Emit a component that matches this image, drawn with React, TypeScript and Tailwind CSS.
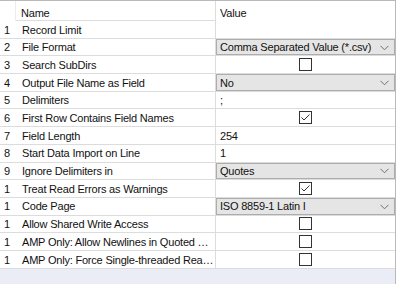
import React from "react";

type Row = {
  num: string;
  name: string;
  kind: "text" | "select" | "check" | "empty";
  value?: string;
  checked?: boolean;
};

const ROWS: Row[] = [
  { num: "1", name: "Record Limit", kind: "empty" },
  { num: "2", name: "File Format", kind: "select", value: "Comma Separated Value (*.csv)" },
  { num: "3", name: "Search SubDirs", kind: "check", checked: false },
  { num: "4", name: "Output File Name as Field", kind: "select", value: "No" },
  { num: "5", name: "Delimiters", kind: "text", value: ";" },
  { num: "6", name: "First Row Contains Field Names", kind: "check", checked: true },
  { num: "7", name: "Field Length", kind: "text", value: "254" },
  { num: "8", name: "Start Data Import on Line", kind: "text", value: "1" },
  { num: "9", name: "Ignore Delimiters in", kind: "select", value: "Quotes" },
  { num: "1", name: "Treat Read Errors as Warnings", kind: "check", checked: true },
  { num: "1", name: "Code Page", kind: "select", value: "ISO 8859-1 Latin I" },
  { num: "1", name: "Allow Shared Write Access", kind: "check", checked: false },
  { num: "1", name: "AMP Only: Allow Newlines in Quoted Fields", kind: "check", checked: false },
  { num: "1", name: "AMP Only: Force Single-threaded Read Mode", kind: "check", checked: false },
];

function Chevron() {
  return (
    <svg width="9" height="6" viewBox="0 0 9 6" fill="none" stroke="#707070" strokeWidth="1">
      <path d="M0.5 0.8 L4.5 4.8 L8.5 0.8" />
    </svg>
  );
}

function Check({ checked }: { checked?: boolean }) {
  return (
    <div className="w-[13px] h-[13px] border border-[#333333] bg-white flex items-center justify-center">
      {checked && (
        <svg width="11" height="11" viewBox="0 0 11 11" fill="none" stroke="#333333" strokeWidth="1">
          <path d="M1.5 5.5 L4 8 L9.5 2.5" />
        </svg>
      )}
    </div>
  );
}

function ValueCell({ row }: { row: Row }) {
  if (row.kind === "select") {
    return (
      <div className="h-full w-full flex items-center justify-between bg-[#e5e5e5] border border-[#adadad] pl-[3px] pr-[5px] pt-[1px] whitespace-nowrap">
        <span>{row.value}</span>
        <Chevron />
      </div>
    );
  }
  if (row.kind === "check") {
    return (
      <div className="h-full w-full flex items-center justify-center">
        <Check checked={row.checked} />
      </div>
    );
  }
  return <div className="h-full w-full flex items-center pl-[4px] pt-[1px] whitespace-nowrap">{row.value ?? ""}</div>;
}

export default function App() {
  return (
    <div
      className="w-[400px] h-[284px] bg-white text-[11px] tracking-[-0.2px] text-[#111111] overflow-hidden"
      style={{ fontFamily: '"Liberation Sans", Arial, sans-serif' }}
    >
      <div className="w-[396px] h-[284px] flex flex-col border-t border-r border-[#b9b9b9] bg-[#eaedf5]">
        {/* header */}
        <div className="flex h-[20px] bg-white shrink-0">
          <div className="w-[16px] border-r border-[#ececec]" />
          <div className="w-[199px] flex items-start pt-[4px] pl-[5px] border-b border-[#dcdcdc]">Name</div>
          <div className="flex-1 flex items-start pt-[4px] pl-[4px] border-l border-[#dcdcdc]">Value</div>
        </div>
        {ROWS.map((r, i) => (
          <div key={i} className="flex h-[17.7px] bg-white shrink-0">
            <div className="w-[215px] flex items-center pt-[1px] border-b border-[#dcdcdc]">
              <span className="w-[17px] pl-[4px]">{r.num}</span>
              <span className="pl-[5px] truncate w-[198px]">{r.name}</span>
            </div>
            <div className="flex-1 border-l border-[#dcdcdc] border-b">
              <ValueCell row={r} />
            </div>
          </div>
        ))}
      </div>
    </div>
  );
}
